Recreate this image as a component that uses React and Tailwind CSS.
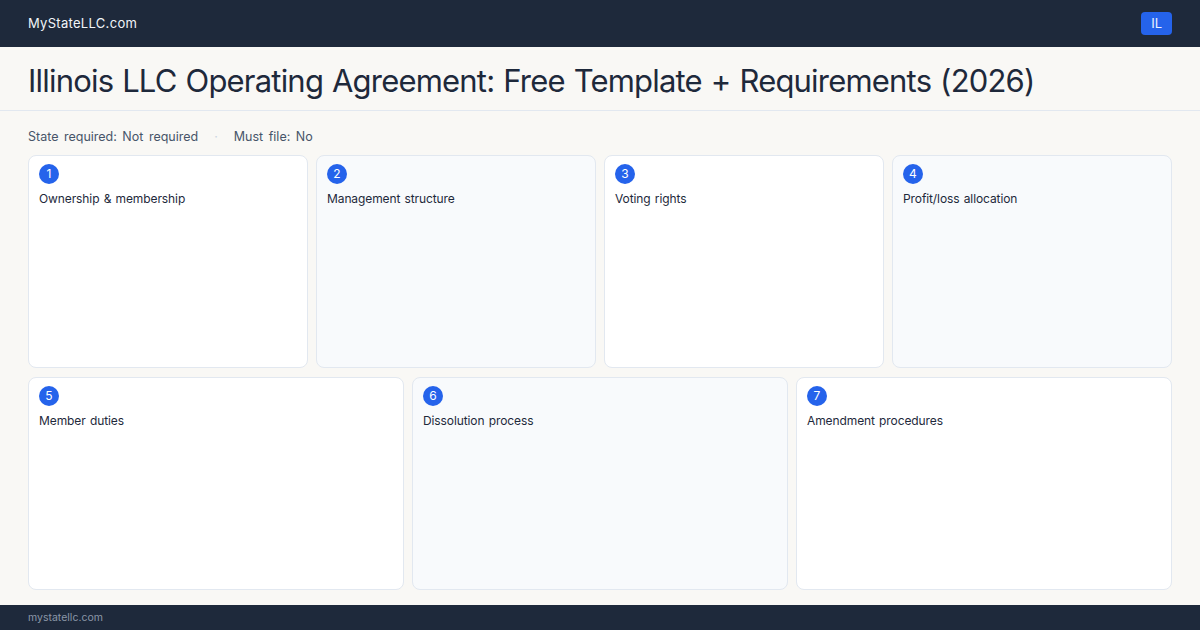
const items = [
  'Ownership & membership',
  'Management structure',
  'Voting rights',
  'Profit/loss allocation',
  'Member duties',
  'Dissolution process',
  'Amendment procedures',
];

function Card({ n, title, alt }) {
  return (
    <div className={`rounded-lg border border-[#e2e8f0] px-[10px] pt-[8px] ${alt ? 'bg-[#f8fafc]' : 'bg-white'}`}>
      <div className="flex h-5 w-5 items-center justify-center rounded-full bg-[#2563eb] text-[12px] text-white">{n}</div>
      <div className="mt-[7px] text-[12px] leading-4 tracking-[-0.1px] text-[#1e293b] [word-spacing:1px]">{title}</div>
    </div>
  );
}

export default function App() {
  return (
    <div className="flex h-[630px] w-[1200px] flex-col bg-[#f9f8f5] font-['Inter',sans-serif]">
      <header className="flex h-[47px] items-center justify-between bg-[#1e293b] px-7">
        <span className="text-[13px] tracking-[0.3px] text-[#f1f5f9]">MyStateLLC.com</span>
        <span className="rounded bg-[#2563eb] px-[10px] py-[3px] text-[13px] leading-[17px] text-[#eef2ff]">IL</span>
      </header>
      <div className="border-b border-[#e2e8f0] px-7 pb-[12px] pt-[17px]">
        <h1 className="text-[31px] leading-[34px] tracking-[-0.8px] text-[#1e293b] [word-spacing:1px]">Illinois LLC Operating Agreement: Free Template + Requirements (2026)</h1>
      </div>
      <main className="flex flex-1 flex-col px-7 pb-[15px] pt-[18px]">
        <div className="flex items-center text-[12.5px] leading-4 text-[#475569] [word-spacing:2px]">
          <span>State required: Not required</span>
          <span className="mx-[16px] text-[#cbd5e1]">·</span>
          <span>Must file: No</span>
        </div>
        <div className="mt-[10px] grid flex-1 grid-cols-4 gap-2">
          {items.slice(0, 4).map((t, i) => (
            <Card key={t} n={i + 1} title={t} alt={i % 2 === 1} />
          ))}
        </div>
        <div className="mt-[9px] grid flex-1 grid-cols-3 gap-2">
          {items.slice(4).map((t, i) => (
            <Card key={t} n={i + 5} title={t} alt={i % 2 === 1} />
          ))}
        </div>
      </main>
      <footer className="flex h-[25px] items-center bg-[#1e293b] px-7 text-[10.5px] text-[#8b97a8]">mystatellc.com</footer>
    </div>
  );
}
